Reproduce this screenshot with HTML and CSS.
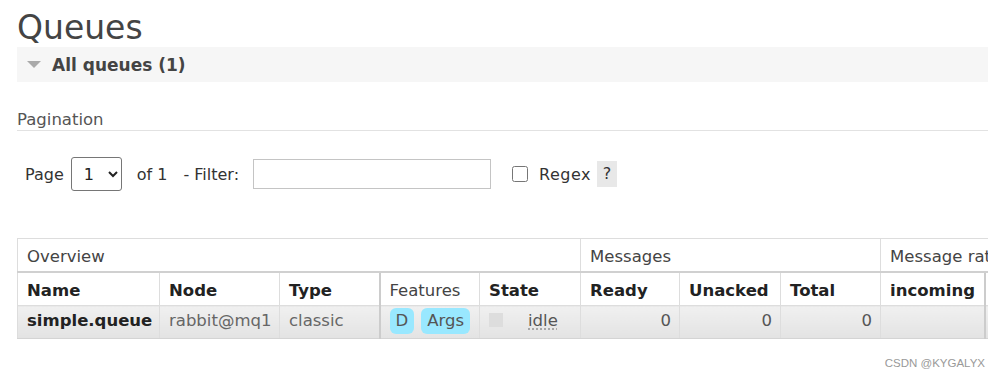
FILE: index.html
```html
<!DOCTYPE html>
<html lang="en">
<head>
    <meta charset="UTF-8">
    <meta name="viewport" content="width=device-width, initial-scale=1.0">
    <title>Queues</title>
    <link rel="stylesheet" href="styles.css">
</head>
<body>

<div class="main">
    <h1>Queues</h1>

    <!-- Section toggle -->
    <div class="section-head">
        <span class="toggle"></span>
        <h2>All queues (1)</h2>
    </div>

    <h3>Pagination</h3>

    <!-- Pagination and filter controls -->
    <div class="filter-row">
        <label for="page">Page</label>
        <select id="page" class="page-select">
            <option>1</option>
        </select>
        <span class="of">of 1</span>
        <label for="filter" class="filter-label">- Filter:</label>
        <input type="text" id="filter" class="filter-input">
        <input type="checkbox" id="regex" class="regex-box">
        <label for="regex" class="regex-label">Regex</label>
        <span class="help">?</span>
    </div>

    <!-- Queue list -->
    <div class="table-wrap">
        <table class="list">
            <colgroup>
                <col style="width: 142px">
                <col style="width: 120px">
                <col style="width: 100px">
                <col style="width: 100px">
                <col style="width: 101px">
                <col style="width: 99px">
                <col style="width: 101px">
                <col style="width: 100px">
                <col style="width: 104px">
                <col style="width: 100px">
            </colgroup>
            <thead>
                <tr class="group-row">
                    <th colspan="5">Overview</th>
                    <th colspan="3">Messages</th>
                    <th colspan="2">Message rates</th>
                </tr>
                <tr class="col-row">
                    <th>Name</th>
                    <th>Node</th>
                    <th>Type</th>
                    <th class="features plain">Features</th>
                    <th>State</th>
                    <th>Ready</th>
                    <th>Unacked</th>
                    <th>Total</th>
                    <th>incoming</th>
                    <th class="rate">deliver / get</th>
                </tr>
            </thead>
            <tbody>
                <tr class="alt">
                    <td class="name">simple.queue</td>
                    <td class="muted">rabbit@mq1</td>
                    <td class="muted">classic</td>
                    <td class="features">
                        <span class="badge">D</span><span class="badge">Args</span>
                    </td>
                    <td><span class="state-box"></span><abbr class="state">idle</abbr></td>
                    <td class="num">0</td>
                    <td class="num">0</td>
                    <td class="num">0</td>
                    <td></td>
                    <td class="rate"></td>
                </tr>
            </tbody>
        </table>
    </div>
</div>

<div class="watermark">CSDN @KYGALYX</div>

</body>
</html>
```

FILE: styles.css
```css
body {
    font-family: Verdana, "DejaVu Sans", sans-serif;
    font-size: 16.5px;
    color: #444;
    background-color: #fff;
    margin: 0;
}

.main {
    width: 971px;
    margin-left: 17px;
}

h1 {
    font-size: 33px;
    font-weight: normal;
    line-height: 39px;
    color: #444;
    margin: 0;
    padding-top: 8px;
}

.section-head {
    background-color: #f6f6f6;
    height: 35px;
    display: flex;
    align-items: center;
}

.toggle {
    width: 0;
    height: 0;
    border-left: 7px solid transparent;
    border-right: 7px solid transparent;
    border-top: 7px solid #aaa;
    margin-left: 10px;
    margin-right: 11px;
}

h2 {
    font-size: 17px;
    font-weight: bold;
    color: #444;
    margin: 0;
}

h3 {
    font-size: 16.5px;
    font-weight: normal;
    line-height: 20px;
    color: #555;
    margin: 28px 0 0 0;
    border-bottom: 1px solid #e2e2e2;
}

.filter-row {
    display: flex;
    align-items: center;
    margin-top: 26px;
    padding-left: 8px;
    font-size: 16px;
    color: #333;
}

.page-select {
    font-family: inherit;
    font-size: 16px;
    width: 51px;
    height: 34px;
    margin-left: 7px;
    padding-left: 8px;
    border: 1px solid #767676;
    border-radius: 3px;
    background-color: #fff;
    color: #222;
}

.of {
    margin-left: 15px;
}

.filter-label {
    margin-left: 16px;
}

.filter-input {
    width: 238px;
    height: 30px;
    box-sizing: border-box;
    margin: 0 0 0 14px;
    border: 1px solid #c4c4c4;
}

.regex-box {
    width: 16px;
    height: 16px;
    margin: 0 0 0 21px;
}

.regex-label {
    margin-left: 11px;
    letter-spacing: 0.5px;
}

.help {
    margin-left: 6px;
    width: 20px;
    height: 26px;
    line-height: 26px;
    text-align: center;
    background-color: #e8e8e8;
    color: #333;
}

.table-wrap {
    margin-top: 47px;
    overflow: hidden;
}

table.list {
    table-layout: fixed;
    width: 1067px;
    border-collapse: collapse;
    border-top: 1px solid #ddd;
    border-left: 1px solid #ddd;
}

table.list th,
table.list td {
    text-align: left;
    line-height: 20px;
    padding: 8px 8px 4px 9px;
    border-right: 1px solid #ddd;
    white-space: nowrap;
    overflow: hidden;
}

.group-row th {
    font-weight: normal;
    color: #444;
    border-bottom: 2px solid #d0d0d0;
}

.col-row th {
    color: #222;
    border-bottom: 1px solid #ddd;
}

.col-row th.plain {
    font-weight: normal;
    color: #444;
}

table.list .features {
    border-left: 2px solid #ccc;
}

table.list .rate {
    border-left: 2px solid #ccc;
}

tr.alt td {
    background: linear-gradient(#f0f0f0, #e3e3e3);
    border-bottom: 1px solid #d4d4d4;
    padding-top: 2px;
    padding-bottom: 4px;
    color: #555;
}

td.name {
    font-weight: bold;
    color: #222;
}

tr.alt td.name {
    color: #222;
}

tr.alt td.muted {
    color: #666;
}

table.list td.num {
    text-align: right;
    padding-right: 8px;
}

.badge {
    display: inline-block;
    background-color: #99e8ff;
    color: #555;
    border-radius: 6px;
    line-height: 20px;
    padding: 3px 6px;
    margin-right: 7px;
}

.state-box {
    display: inline-block;
    width: 14px;
    height: 14px;
    background-color: #ddd;
    vertical-align: -1px;
    margin-right: 25px;
}

.state {
    text-decoration: underline dotted #999;
    text-underline-offset: 3px;
}

.watermark {
    position: absolute;
    right: 16px;
    top: 357px;
    font-family: "Liberation Sans", Arial, sans-serif;
    font-size: 11.5px;
    color: #999;
}
```
